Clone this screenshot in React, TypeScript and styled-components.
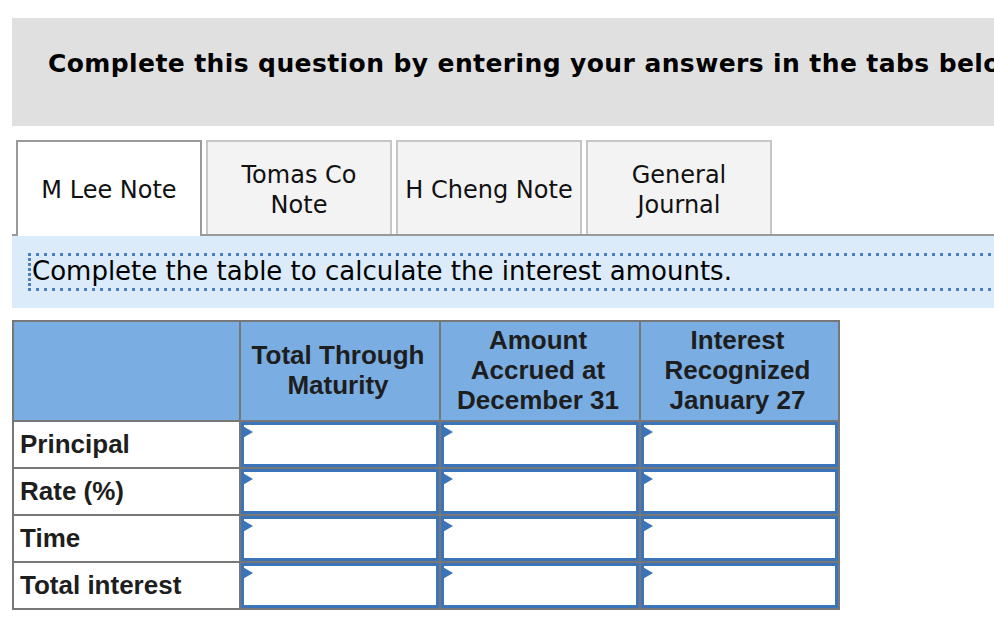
import React from "react";
import styled, { createGlobalStyle } from "styled-components";

const Global = createGlobalStyle`
  html, body { margin: 0; padding: 0; background: #ffffff; }
  body { overflow: hidden; }
`;

const Page = styled.div`
  width: 994px;
  height: 626px;
  overflow: hidden;
  padding-top: 18px;
  box-sizing: border-box;
  font-family: "DejaVu Sans", Verdana, sans-serif;
`;

const Banner = styled.div`
  margin-left: 12px;
  height: 108px;
  background: #e0e0e0;
  display: flex;
  align-items: center;
  padding-left: 36px;
  padding-bottom: 17px;
  box-sizing: border-box;
  white-space: nowrap;
  overflow: hidden;
  font-weight: bold;
  font-size: 25px;
  letter-spacing: 0.4px;
  color: #000;
`;

const TabStrip = styled.div`
  margin-top: 14px;
  margin-left: 12px;
  padding-left: 4px;
  display: flex;
  align-items: flex-end;
  gap: 4px;
  border-bottom: 2px solid #9a9a9a;
  height: 94px;
`;

const Tab = styled.div<{ $active?: boolean }>`
  width: 186px;
  box-sizing: border-box;
  height: ${(p) => (p.$active ? "96px" : "94px")};
  margin-bottom: ${(p) => (p.$active ? "-2px" : "0")};
  border: 2px solid ${(p) => (p.$active ? "#9a9a9a" : "#c6c6c6")};
  border-bottom: none;
  background: ${(p) => (p.$active ? "#ffffff" : "#f3f3f3")};
  display: flex;
  align-items: center;
  justify-content: center;
  text-align: center;
  font-size: 24px;
  line-height: 30px;
  color: #111;
  padding-top: ${(p) => (p.$active ? "2px" : "4px")};
`;

const InfoPanel = styled.div`
  margin-left: 12px;
  height: 72px;
  background: #dbebf9;
  padding-top: 17px;
  padding-left: 16px;
  box-sizing: border-box;
  overflow: hidden;
`;

const DottedBox = styled.div`
  margin-right: -20px;
  height: 38px;
  box-sizing: border-box;
  padding: 2px 0 0 4px;
  background-image:
    repeating-linear-gradient(to right, #4a7fc4 0 3px, transparent 3px 8px),
    repeating-linear-gradient(to right, #4a7fc4 0 3px, transparent 3px 8px),
    repeating-linear-gradient(to bottom, #4a7fc4 0 3px, transparent 3px 5px);
  background-size: 100% 3px, 100% 3px, 3px 100%;
  background-position: 0 0, 0 100%, 0 0;
  background-repeat: no-repeat;
  font-size: 26px;
  line-height: 33px;
  color: #000;
  white-space: nowrap;
`;

const Table = styled.table`
  margin-top: 12px;
  margin-left: 12px;
  border-collapse: collapse;
  border: 2px solid #777;
  font-family: "Liberation Sans", Arial, sans-serif;
  font-weight: bold;
  color: #1e1e1e;
  table-layout: fixed;
`;

const HeadCell = styled.th<{ $w: number }>`
  width: ${(p) => p.$w}px;
  height: 100px;
  background: #7aade2;
  border: 2px solid #777;
  font-size: 26px;
  line-height: 30px;
  text-align: center;
  vertical-align: middle;
  padding: 0 4px 2px 0;
  box-sizing: border-box;
`;

const LabelCell = styled.td`
  border: 2px solid #777;
  height: 46px;
  padding: 0 0 0 6px;
  font-size: 26px;
  vertical-align: middle;
  box-sizing: border-box;
`;

const InputCell = styled.td`
  border: 2px solid #777;
  padding: 0;
  height: 46px;
  box-sizing: border-box;
`;

const InputBox = styled.div`
  position: relative;
  height: 45px;
  box-sizing: border-box;
  border: 3px solid #3b74b8;
  background: #fff;
`;

const Marker = styled.span`
  position: absolute;
  left: -3px;
  top: 0;
  width: 0;
  height: 0;
  border-top: 7px solid transparent;
  border-bottom: 7px solid transparent;
  border-left: 12px solid #3b74b8;
`;

const rows = ["Principal", "Rate (%)", "Time", "Total interest"];

export default function App() {
  return (
    <Page>
      <Global />
      <Banner>Complete this question by entering your answers in the tabs below.</Banner>
      <TabStrip>
        <Tab $active>M Lee Note</Tab>
        <Tab>
          Tomas Co
          <br />
          Note
        </Tab>
        <Tab>H Cheng Note</Tab>
        <Tab>
          General
          <br />
          Journal
        </Tab>
      </TabStrip>
      <InfoPanel>
        <DottedBox>Complete the table to calculate the interest amounts.</DottedBox>
      </InfoPanel>
      <Table>
        <thead>
          <tr>
            <HeadCell $w={227}></HeadCell>
            <HeadCell $w={200}>
              Total Through
              <br />
              Maturity
            </HeadCell>
            <HeadCell $w={200}>
              Amount
              <br />
              Accrued at
              <br />
              December 31
            </HeadCell>
            <HeadCell $w={199}>
              Interest
              <br />
              Recognized
              <br />
              January 27
            </HeadCell>
          </tr>
        </thead>
        <tbody>
          {rows.map((r) => (
            <tr key={r}>
              <LabelCell>{r}</LabelCell>
              {[0, 1, 2].map((i) => (
                <InputCell key={i}>
                  <InputBox>
                    <Marker />
                  </InputBox>
                </InputCell>
              ))}
            </tr>
          ))}
        </tbody>
      </Table>
    </Page>
  );
}
